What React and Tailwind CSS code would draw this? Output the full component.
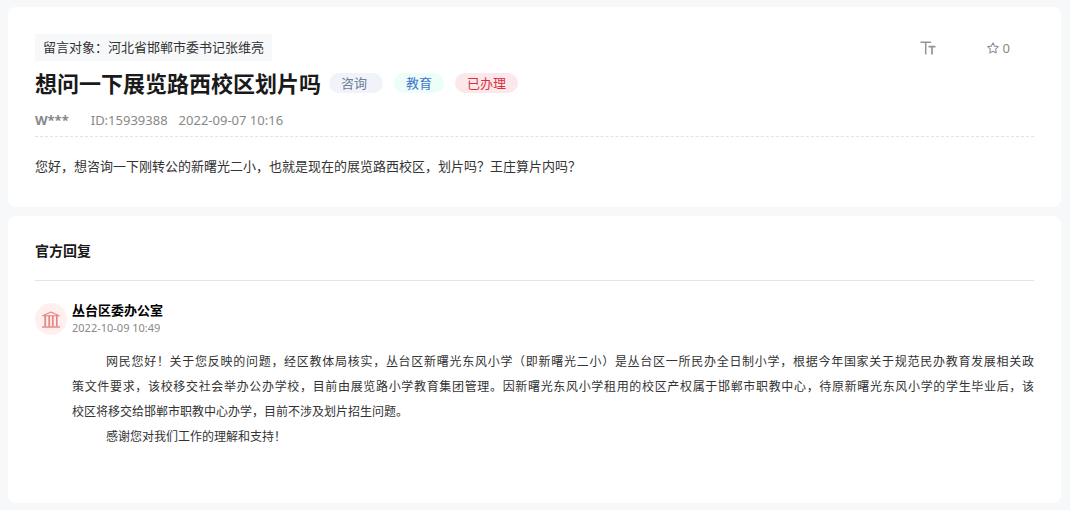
const tags = [
  { label: '咨询', style: 'bg-[#f0f4fa] pr-4 text-[#6b7f95]' },
  { label: '教育', style: 'bg-[#ecfdfa] pr-3 text-[#3f74c6]' },
  { label: '已办理', style: 'bg-[#fce8ea] pr-3 text-[#d9303e]' },
];

function TextSizeIcon() {
  return (
    <svg viewBox="0 0 16 14" className="h-[14px] w-4" fill="none" stroke="currentColor" aria-hidden="true">
      <path d="M0.5 1.2H11M5.7 1V13.5" strokeWidth="1.5" />
      <path d="M8.5 5.6H15.5M12 5.5V13.5" strokeWidth="1.7" />
    </svg>
  );
}

function StarIcon() {
  return (
    <svg viewBox="0 0 12 12" className="h-3 w-3" fill="none" stroke="currentColor" strokeWidth="1.1" strokeLinejoin="round" aria-hidden="true">
      <path d="M6 0.8 7.6 4.1 11.3 4.6 8.6 7.1 9.3 11 6 9.2 2.7 11 3.4 7.1 0.7 4.6 4.4 4.1Z" />
    </svg>
  );
}

function InstitutionIcon() {
  return (
    <svg viewBox="0 0 18 17" className="h-[17px] w-[18px]" fill="none" stroke="currentColor" aria-hidden="true">
      <path d="M0.8 4.8 9 1 17.2 4.8Z" strokeWidth="1.1" strokeLinejoin="round" />
      <path d="M3.2 5V15.5M7.2 5V15.5M10.8 5V15.5M14.8 5V15.5" strokeWidth="1.7" />
      <path d="M0 16H18" strokeWidth="1.4" />
    </svg>
  );
}

function Question() {
  return (
    <article className="rounded-lg bg-white px-[27px] pt-[27px] pb-7">
      <div className="flex items-center justify-between">
        <p className="bg-[#f7f8fa] px-2 text-[13px] leading-[27px] text-[#333]">
          留言对象：河北省邯郸市委书记张维亮
        </p>
        <div className="flex items-center gap-[51px] pr-6 text-[#8c96a0]">
          <button type="button" aria-label="字号">
            <TextSizeIcon />
          </button>
          <button type="button" aria-label="收藏" className="flex items-center gap-1 text-[13px] leading-5">
            <StarIcon />
            <span className="text-[#888]">0</span>
          </button>
        </div>
      </div>
      <div className="flex flex-wrap items-center gap-2">
        <h1 className="text-[22px] leading-[44px] font-bold text-[#1a1a1a]">想问一下展览路西校区划片吗</h1>
        <ul className="flex gap-[11px] text-[13px] leading-5">
          {tags.map((tag) => (
            <li key={tag.label} className={`rounded-full pl-3 ${tag.style}`}>
              {tag.label}
            </li>
          ))}
        </ul>
      </div>
      <div className="flex items-center border-b border-dashed border-[#e2e2e2] pt-[5px] pb-1.5 text-[13px] leading-5 text-[#888]">
        <span className="mr-[22px] font-bold">W***</span>
        <span className="mr-[11px]">ID:15939388</span>
        <time dateTime="2022-09-07T10:16">2022-09-07 10:16</time>
      </div>
      <p className="pt-[17px] text-[13px] leading-[25px] text-[#333]">
        您好，想咨询一下刚转公的新曙光二小，也就是现在的展览路西校区，划片吗？王庄算片内吗？
      </p>
    </article>
  );
}

function Reply() {
  return (
    <section className="rounded-lg bg-white px-[27px] pt-[22px] pb-[54px]">
      <h2 className="border-b border-[#e5e5e5] pb-[17px] text-sm leading-[25px] font-bold text-[#1a1a1a]">官方回复</h2>
      <div className="flex items-center pt-5">
        <span className="mr-[5px] flex h-8 w-8 shrink-0 items-center justify-center rounded-full bg-[#ffefee] text-[#e58480]">
          <InstitutionIcon />
        </span>
        <div>
          <h3 className="text-[13px] leading-[18px] font-bold text-black">丛台区委办公室</h3>
          <time dateTime="2022-10-09T10:49" className="block text-[11px] leading-[18px] text-[#888]">
            2022-10-09 10:49
          </time>
        </div>
      </div>
      <div className="pt-3 pl-[37px] text-xs leading-[25px] text-[#333]">
        <p className="indent-[34px]">
          <span className="block [text-align-last:justify]">
            网民您好！关于您反映的问题，经区教体局核实，丛台区新曙光东风小学（即新曙光二小）是丛台区一所民办全日制小学，根据今年国家关于规范民办教育发展相关政
          </span>
          <span className="block indent-0 [text-align-last:justify]">
            策文件要求，该校移交社会举办公办学校，目前由展览路小学教育集团管理。因新曙光东风小学租用的校区产权属于邯郸市职教中心，待原新曙光东风小学的学生毕业后，该
          </span>
          <span className="block indent-0">校区将移交给邯郸市职教中心办学，目前不涉及划片招生问题。</span>
        </p>
        <p className="indent-[34px]">感谢您对我们工作的理解和支持！</p>
      </div>
    </section>
  );
}

export default function App() {
  return (
    <main
      lang="zh-CN"
      className="flex min-h-screen flex-col gap-[9px] bg-[#f7f8fa] pt-[7px] pr-[9px] pb-[7px] pl-2 font-['Noto_Sans','Noto_Sans_CJK_SC',sans-serif]"
    >
      <Question />
      <Reply />
    </main>
  );
}
